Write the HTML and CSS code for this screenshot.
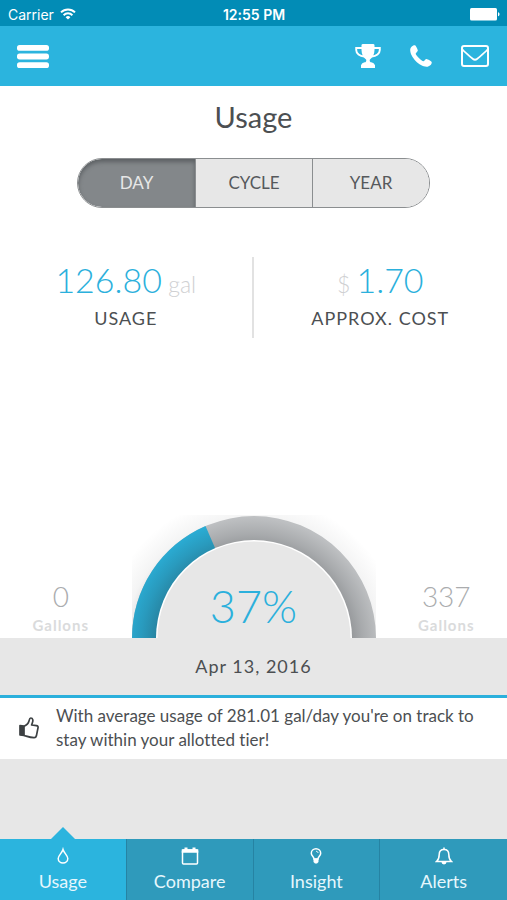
FILE: index.html
```html
<!DOCTYPE html>
<html lang="en">
<head>
<meta charset="utf-8">
<meta name="viewport" content="width=device-width, initial-scale=1">
<title>Usage</title>
<link rel="stylesheet" href="styles.css">
</head>
<body>
<div class="status">
  <span class="carrier">Carrier
    <svg width="16" height="12" viewBox="0 0 16 12" aria-hidden="true"><g fill="none" stroke="#fff" stroke-width="2"><path d="M1 4.4a10 10 0 0 1 14 0"/><path d="M3.6 7.2a6.2 6.2 0 0 1 8.8 0"/></g><path d="M8 11.6 5.6 9.2a3.4 3.4 0 0 1 4.8 0z" fill="#fff"/></svg>
  </span>
  <span class="clock">12:55 PM</span>
  <svg class="battery" width="30" height="13" viewBox="0 0 30 13" aria-hidden="true"><rect width="27" height="12.4" rx="1.5" fill="#fff"/><path d="M28 4.3c2 .6 2 3.4 0 4z" fill="#fff"/></svg>
</div>
<header class="bar">
  <button type="button" class="icon-button menu" aria-label="Menu"><svg width="32" height="23" viewBox="0 0 32 23" fill="#fff"><rect width="32" height="5.8" rx="2.6"/><rect y="8.6" width="32" height="5.8" rx="2.6"/><rect y="17.2" width="32" height="5.8" rx="2.6"/></svg></button>
  <button type="button" class="icon-button" aria-label="Rewards"><svg width="26" height="24" viewBox="0 0 26 24"><path d="M6.500 1.200Q6.500 0 8 0h10q1.500 0 1.500 1.200V6c0 4.500-2 7.500-4.300 9.300-.7.700-.7 2 .1 2.700.8.500 3.900.6 4.200 2.700h.5V24H6v-3.300h.5c.3-2.100 3.400-2.200 4.200-2.700.8-.7.800-2 .1-2.700C8.500 13.500 6.500 10.500 6.500 6z" fill="#fff"/><path d="M7 4H1.200v2c0 3.500 3.600 6.300 8 6.500M19 4h5.800v2c0 3.500-3.600 6.300-8 6.500" fill="none" stroke="#fff" stroke-width="1.900"/></svg></button>
  <button type="button" class="icon-button" aria-label="Call"><svg width="22" height="22" viewBox="0 0 22 22"><path d="M5 .2C3.500-.1.200 1.600.200 5 .2 12 9.500 21.700 16.500 21.700c3.400 0 5.500-2.800 5.200-4.600-.1-.7-4.200-2.800-5-3-1.200-.3-2.200 2.200-3.400 2.200-1.500 0-7.600-6.100-7.600-7.500 0-1.100 2.400-2.200 2.100-3.500C7.600 4.200 5.900.400 5 .2z" fill="#fff"/></svg></button>
  <button type="button" class="icon-button" aria-label="Messages"><svg width="28" height="22" viewBox="0 0 28 22" fill="none" stroke="#fff" stroke-width="2"><rect x="1" y="1" width="26" height="20" rx="2"/><path d="M1.500 4.500c3 3.500 7 6.500 10.200 9.300 1.700 1.400 2.900 1.400 4.600 0C19.500 11 23.500 8 26.500 4.500" stroke-width="1.800"/></svg></button>
</header>
<main>
  <h1>Usage</h1>
  <div class="segments">
    <button type="button" class="active" aria-pressed="true">DAY</button>
    <button type="button">CYCLE</button>
    <button type="button">YEAR</button>
  </div>
  <section class="stats">
    <div class="stat"><p class="value">126.80<small> gal</small></p><p class="label">USAGE</p></div>
    <div class="stat"><p class="value"><small>$ </small>1.70</p><p class="label">APPROX. COST</p></div>
  </section>
  <section class="gauge-row">
    <div class="limit"><p class="number">0</p><p class="unit">Gallons</p></div>
    <div class="gauge">
      <svg viewBox="0 0 264 123" aria-hidden="true">
        <defs>
          <radialGradient id="shade" gradientUnits="userSpaceOnUse" cx="130" cy="130" r="150">
            <stop offset=".62" stop-color="#202428" stop-opacity=".36"/>
            <stop offset=".74" stop-color="#202428" stop-opacity=".18"/>
            <stop offset=".85" stop-color="#202428" stop-opacity=".05"/>
            <stop offset="1" stop-color="#202428" stop-opacity="0"/>
          </radialGradient>
          <clipPath id="box"><rect x="10" width="244" height="123"/></clipPath>
        </defs>
        <path d="M10 123a122 122 0 0 1 244 0z" fill="#c6c8ca"/>
        <path d="M10 123A122 122 0 0 1 83.500 11L132 123z" fill="#2bb4de"/>
        <rect x="10" width="244" height="123" fill="url(#shade)"/>
        <circle cx="132" cy="123" r="98" fill="#fff" clip-path="url(#box)"/>
        <circle cx="132" cy="123" r="96.500" fill="#e7e7e7" clip-path="url(#box)"/>
      </svg>
      <p class="percent">37%</p>
    </div>
    <div class="limit"><p class="number">337</p><p class="unit">Gallons</p></div>
  </section>
  <p class="date">Apr 13, 2016</p>
  <section class="tip">
    <svg width="20" height="22" viewBox="0 0 20 22" fill="none" stroke="#3c4042" stroke-width="1.700" stroke-linejoin="round" aria-hidden="true"><path d="M1 8.500 5 9v9.500l-4-.5z" fill="#3c4042"/><path d="M5 9.200c2-.7 4.500-3.200 5-5.200.4-1.600.5-3 1.800-3 2.200 0 2.500 2.600 1.500 5L12.600 8l4.800.6c1.300.2 1.900 1 1.600 2.200l-1.600 8c-.3 1.300-1.200 2-2.500 1.900C11 20.500 8 19.300 5 18.500"/></svg>
    <p>With average usage of 281.01 gal/day you're on track to stay within your allotted tier!</p>
  </section>
</main>
<nav class="tabs">
  <a href="#usage" class="current" aria-current="page"><svg width="12" height="18" viewBox="0 0 12 18"><path d="M6 2.500C5 6 1.200 8.500 1.200 11.500a4.800 4.500 0 0 0 9.600 0C10.800 8.500 7 6 6 2.500z"/></svg>Usage</a>
  <a href="#compare"><svg width="18" height="18" viewBox="0 0 18 18"><rect x="1.500" y="3" width="15" height="14" rx="1"/><path d="M1.500 3h15v2h-15z" fill="#fff"/><path d="M5 .5V4M13 .5V4" stroke-width="3"/></svg>Compare</a>
  <a href="#insight"><svg width="12" height="18" viewBox="0 0 12 18"><path d="M4 12C4 9.500 1.300 9 1.300 6.300a4.700 4.500 0 0 1 9.400 0C10.700 9 8 9.500 8 12z"/><path d="M6 4.300c1.200 0 2 .7 2 1.700" stroke-width="1"/><path d="M3.500 11.500h5V15L7 16.500H5L3.500 15z" fill="#fff" stroke="none"/></svg>Insight</a>
  <a href="#alerts"><svg width="18" height="18" viewBox="0 0 18 18"><path d="M1.500 14.500C4 12.500 4.200 10 4.200 7.500 4.200 4.500 6 2.500 9 2.500s4.800 2 4.800 5c0 2.500.2 5 2.700 7z"/><path d="M9 .5v2"/><path d="M6.500 15h5a2.500 2.500 0 0 1-5 0z" fill="#fff" stroke="none"/></svg>Alerts</a>
</nav>
</body>
</html>
```

FILE: styles.css
```css
* { box-sizing: border-box; margin: 0; }

body {
  min-height: 100vh;
  display: flex;
  flex-direction: column;
  background: #fff;
  color: #4c4f52;
  font-family: Lato, "Open Sans", sans-serif;
  font-variant-ligatures: none;
}

button { font: inherit; cursor: pointer; }

.status {
  display: grid;
  grid-template-columns: 1fr auto 1fr;
  align-items: center;
  height: 26px;
  padding: 2px 7px 0 8px;
  background: #028cb6;
  color: #fff;
  font-family: Inter, sans-serif;
  font-size: 14px;
}
.carrier { display: flex; align-items: center; gap: 6px; }
.clock { font-weight: 600; }
.battery { justify-self: end; }

.bar {
  display: flex;
  align-items: center;
  gap: 29px;
  height: 60px;
  padding: 0 18px 0 17px;
  background: #2bb4de;
}
.icon-button {
  display: flex;
  padding: 0;
  border: 0;
  background: none;
}
.menu { margin-right: auto; }

main {
  flex: 1;
  display: flex;
  flex-direction: column;
  padding-bottom: 80px;
  background: linear-gradient(#e7e7e7, #e7e7e7) bottom / 100% 160px no-repeat;
}

h1 {
  padding: 13px 0 23px;
  font-size: 29px;
  line-height: 36px;
  font-weight: 400;
  text-align: center;
}

.segments {
  display: grid;
  grid-template-columns: repeat(3, 1fr);
  margin: 0 77px;
  border: 1px solid #8b8e90;
  border-radius: 25px;
  overflow: hidden;
}
.segments button {
  height: 48px;
  padding: 0 0 2px;
  border: 0;
  border-left: 1px solid #8b8e90;
  background: #e7e7e7;
  color: #56595c;
  font-size: 17px;
}
.segments .active {
  border-left: 0;
  border-radius: 24px 0 0 24px;
  background: #83878a;
  box-shadow: inset 0 3px 4px #5c6063;
  color: #e7e7e7;
}

.stats {
  display: grid;
  grid-template-columns: 1fr 1fr;
  margin-top: 49px;
}
.stat {
  height: 81px;
  padding-top: 3px;
  text-align: center;
}
.stat:first-child { border-right: 2px solid #e2e2e2; }
.value {
  color: #2bb0dc;
  font-size: 34px;
  font-weight: 300;
  line-height: 40px;
}
.value small {
  color: #cfd0d2;
  font-size: 23px;
}
.label {
  margin-top: 2px;
  font-size: 18px;
  line-height: 24px;
  letter-spacing: 1px;
}

.gauge-row {
  display: grid;
  grid-template-columns: 1fr 264px 1fr;
  align-items: end;
  margin-top: auto;
}
.limit {
  color: #aaacae;
  text-align: center;
}
.number {
  font-size: 28px;
  font-weight: 300;
  line-height: 36px;
}
.unit {
  padding-bottom: 2px;
  color: #dadbdc;
  font-size: 15px;
  font-weight: 700;
  line-height: 22px;
  letter-spacing: 1px;
}
.gauge { display: grid; }
.gauge > * { grid-area: 1 / 1; }
.gauge svg { display: block; width: 100%; }
.percent {
  align-self: end;
  padding-bottom: 6px;
  color: #2bb0dc;
  font-size: 45px;
  font-weight: 300;
  line-height: 52px;
  text-align: center;
}

.date {
  padding: 16px 0 17px;
  background: #e7e7e7;
  font-size: 18px;
  line-height: 24px;
  letter-spacing: 1px;
  text-align: center;
}

.tip {
  display: flex;
  align-items: center;
  gap: 17px;
  padding: 6px 16px 7px 19px;
  border-top: 3px solid #2bb0dc;
  background: #fff;
  font-size: 17px;
  line-height: 24px;
}
.tip svg { flex: none; }

.tabs {
  display: grid;
  grid-template-columns: repeat(4, 1fr);
}
.tabs a {
  display: flex;
  flex-direction: column;
  align-items: center;
  height: 61px;
  padding-top: 8px;
  border-right: 1px solid #2683a3;
  background: #2f9abb;
  color: #e6f7fd;
  font-size: 18px;
  line-height: 24px;
  text-decoration: none;
}
.tabs a:last-child { border-right: 0; }
.tabs svg {
  height: 18px;
  margin-bottom: 4px;
  fill: none;
  stroke: #fff;
  stroke-width: 1.5;
}
.tabs .current {
  position: relative;
  background: #2bb4de;
}
.tabs .current::before {
  content: "";
  position: absolute;
  bottom: 100%;
  border: 12px solid transparent;
  border-top: 0;
  border-bottom-color: #2bb4de;
}
```
